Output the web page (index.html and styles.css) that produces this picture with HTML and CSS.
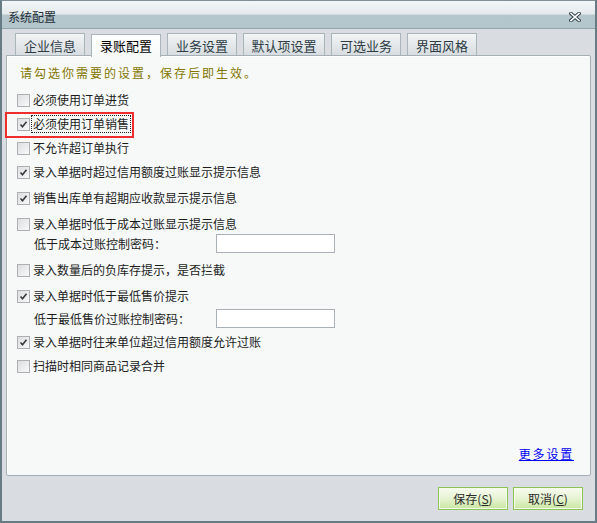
FILE: index.html
```html
<!DOCTYPE html>
<html lang="zh-CN">
<head>
<meta charset="utf-8">
<title>系统配置</title>
<link rel="stylesheet" href="styles.css">
</head>
<body>
<div class="window">
  <div class="titlebar">
    <span class="title">系统配置</span>
    <span class="close">
      <svg width="12" height="10" viewBox="0 0 12 10">
        <path d="M2 1.5 L10 8.5 M10 1.5 L2 8.5" stroke="#34454e" stroke-width="3.6" stroke-linecap="square" fill="none"/>
        <path d="M2 1.5 L10 8.5 M10 1.5 L2 8.5" stroke="#ffffff" stroke-width="1.6" stroke-linecap="square" fill="none"/>
      </svg>
    </span>
  </div>
  <div class="body">
    <div class="tabs">
      <div class="tab">企业信息</div>
      <div class="tab active">录账配置</div>
      <div class="tab">业务设置</div>
      <div class="tab wide">默认项设置</div>
      <div class="tab">可选业务</div>
      <div class="tab">界面风格</div>
    </div>
    <div class="panel">
      <p class="hint">请勾选你需要的设置，保存后即生效。</p>
      <div class="opts">
        <div class="row"><span class="cb"></span><span class="lbl">必须使用订单进货</span></div>
        <div class="row"><span class="cb on"><svg width="11" height="11" viewBox="0 0 11 11"><path d="M2.5 5.5 L4.5 7.8 L8.5 2.8" stroke="#3a3a3a" stroke-width="1.6" fill="none"/></svg></span><span class="lbl focus">必须使用订单销售</span></div>
        <div class="row"><span class="cb"></span><span class="lbl">不允许超订单执行</span></div>
        <div class="row"><span class="cb on"><svg width="11" height="11" viewBox="0 0 11 11"><path d="M2.5 5.5 L4.5 7.8 L8.5 2.8" stroke="#3a3a3a" stroke-width="1.6" fill="none"/></svg></span><span class="lbl">录入单据时超过信用额度过账显示提示信息</span></div>
        <div class="row mt2"><span class="cb on"><svg width="11" height="11" viewBox="0 0 11 11"><path d="M2.5 5.5 L4.5 7.8 L8.5 2.8" stroke="#3a3a3a" stroke-width="1.6" fill="none"/></svg></span><span class="lbl">销售出库单有超期应收款显示提示信息</span></div>
        <div class="row mt2"><span class="cb"></span><span class="lbl">录入单据时低于成本过账显示提示信息</span></div>
        <div class="sub"><span class="sublbl">低于成本过账控制密码：</span><span class="input"></span></div>
        <div class="row mt5"><span class="cb"></span><span class="lbl">录入数量后的负库存提示，是否拦截</span></div>
        <div class="row mt2"><span class="cb on"><svg width="11" height="11" viewBox="0 0 11 11"><path d="M2.5 5.5 L4.5 7.8 L8.5 2.8" stroke="#3a3a3a" stroke-width="1.6" fill="none"/></svg></span><span class="lbl">录入单据时低于最低售价提示</span></div>
        <div class="sub sub2"><span class="sublbl">低于最低售价过账控制密码：</span><span class="input"></span></div>
        <div class="row mt2"><span class="cb on"><svg width="11" height="11" viewBox="0 0 11 11"><path d="M2.5 5.5 L4.5 7.8 L8.5 2.8" stroke="#3a3a3a" stroke-width="1.6" fill="none"/></svg></span><span class="lbl">录入单据时往来单位超过信用额度允许过账</span></div>
        <div class="row"><span class="cb"></span><span class="lbl">扫描时相同商品记录合并</span></div>
      </div>
      <div class="more"><a href="#">更多设置</a></div>
    </div>
    <div class="buttons">
      <button class="btn">保存(<u>S</u>)</button>
      <button class="btn">取消(<u>C</u>)</button>
    </div>
  </div>
  <div class="redmark"></div>
</div>
</body>
</html>
```

FILE: styles.css
```css
* { box-sizing: border-box; }
html, body { margin: 0; padding: 0; }
body {
  font-family: "Noto Sans CJK SC", "DejaVu Sans", sans-serif;
  font-size: 12px;
  color: #222;
  background: #d9dde1;
}
.window {
  position: relative;
  width: 597px;
  height: 523px;
  border: 2px solid #677b85;
  border-top: 1px solid #7d8e96;
  background: #d9dde1;
  display: flex;
  flex-direction: column;
}
.titlebar {
  height: 28px;
  flex: none;
  background: linear-gradient(to bottom, #f3f6f7 0px, #e4eaec 13px, #b5c7cc 14px, #b3c6cb 27px);
  border-bottom: 1px solid #93a4ab;
  display: flex;
  align-items: center;
  justify-content: space-between;
  padding: 4px 14px 0 6px;
}
.title {
  color: #1f2e36;
  font-size: 12px;
  line-height: 16px;
}
.close { display: flex; margin-top: 1px; }
.body {
  flex: 1;
  display: flex;
  flex-direction: column;
  padding: 4px 4px 0;
}
.tabs {
  display: flex;
  gap: 6px;
  padding-left: 9px;
  height: 22px;
  position: relative;
  z-index: 2;
}
.tab {
  width: 70px;
  height: 22px;
  border: 1px solid #a9b5bb;
  border-bottom: none;
  background: linear-gradient(to bottom, #f2f4f5, #d7dde0);
  color: #2d3c44;
  font-size: 13px;
  text-align: center;
  line-height: 21px;
  padding-top: 1px;
}
.tab.wide { width: 82px; }
.tab.active {
  height: 23px;
  margin-top: 1px;
  background: linear-gradient(to bottom, #ffffff, #f7f9f9);
  color: #000;
  padding-top: 0;
}
.panel {
  height: 421px;
  flex: none;
  border: 1px solid #a4b0b6;
  border-radius: 0 2px 2px 2px;
  background: #f7f9f9;
  box-shadow: inset 1px 1px 0 #ffffff;
  display: flex;
  flex-direction: column;
  position: relative;
  z-index: 1;
}
.hint {
  margin: 7px 0 0 13px;
  line-height: 20px;
  color: #847600;
  letter-spacing: 2px;
}
.opts {
  margin-top: 5px;
  display: flex;
  flex-direction: column;
}
.row {
  height: 24px;
  display: flex;
  align-items: center;
  padding-left: 10px;
}
.row.mt2 { margin-top: 2px; }
.row.mt5 { margin-top: 5px; }
.cb {
  width: 13px;
  height: 13px;
  flex: none;
  border: 1px solid #acb0b3;
  background: linear-gradient(135deg, #dcdee0, #f8f9f9);
  display: flex;
  align-items: center;
  justify-content: center;
}
.lbl {
  margin-left: 3px;
  color: #1c1c1c;
  line-height: 16px;
}
.lbl.focus {
  outline: 1px dotted #222;
  outline-offset: 0;
  padding: 0 1px;
  margin-left: 2px;
}
.sub {
  height: 19px;
  margin-top: -2px;
  display: flex;
  align-items: center;
  padding-left: 27px;
}
.sub2 { margin-top: 1px; }
.sublbl {
  width: 182px;
  color: #1c1c1c;
}
.input {
  width: 119px;
  height: 19px;
  border: 1px solid #aab1b6;
  background: #fff;
}
.more {
  margin-top: auto;
  padding: 0 16px 13px 0;
  text-align: right;
  line-height: 16px;
}
.more a {
  color: #0000ee;
  letter-spacing: 1.8px;
  text-decoration: underline;
}
.buttons {
  margin-top: 11px;
  display: flex;
  justify-content: flex-end;
  gap: 5px;
  padding-right: 8px;
}
.btn {
  width: 70px;
  height: 23px;
  border: 1px solid #8cc556;
  background: linear-gradient(to bottom, #f7fbf0, #e6f3d2 50%, #c9e6a0);
  box-shadow: inset 0 0 0 1px #f4faea;
  font-family: "Noto Sans CJK SC", "DejaVu Sans", sans-serif;
  font-size: 12px;
  color: #2a2a2a;
  padding: 0;
  line-height: 20px;
}
.btn u { text-decoration: underline; }
.redmark {
  position: absolute;
  left: 3px;
  top: 111px;
  width: 129px;
  height: 26px;
  border: 2px solid #ee2e2e;
  z-index: 5;
}
```
